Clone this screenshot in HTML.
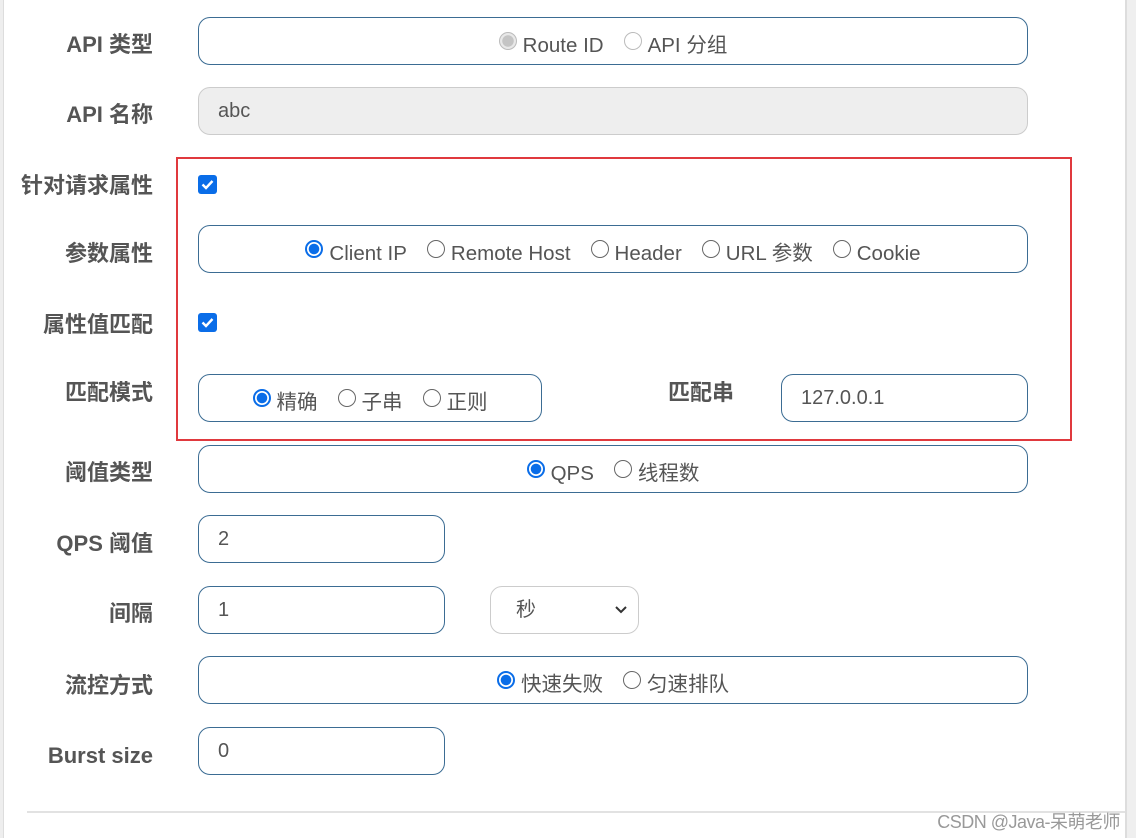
<!DOCTYPE html>
<html><head><meta charset="utf-8"><style>
body{margin:0;width:1136px;height:838px;overflow:hidden;background:#fff;position:relative;font-family:"Liberation Sans","Noto Sans CJK SC",sans-serif;color:#555}
.lb{position:absolute;right:983px;font-weight:bold;font-size:22px;color:#555;line-height:30px;white-space:nowrap}
.box{position:absolute;border:1px solid #3b6c93;border-radius:12px;box-sizing:border-box;height:48px}
.rg{display:flex;justify-content:center;align-items:center;font-size:20.5px;color:#555;padding-top:10px;line-height:24px}
.rg span{flex-shrink:0}
.r{display:inline-block;width:18px;height:18px;border:1.5px solid #666;border-radius:50%;box-sizing:border-box;margin:0 6px 0 0;position:relative;top:-5px}
.r.on{border:2px solid #0a6de8;background:radial-gradient(circle,#0a6de8 5px,#fff 5.5px)}
.r.dis{border:1.5px solid #bbb;background:radial-gradient(circle,#c4c4c4 5.5px,#e8e8e8 6px)}
.it{margin-right:20px}
.in{font-size:20px;color:#555;padding-left:19px;line-height:46px}
.cb{position:absolute;left:198px;width:19px;height:19px;background:#0a6de8;border-radius:3px}
</style></head><body>
<div style="position:absolute;left:0;top:0;width:3px;height:838px;background:#eee;border-right:1px solid #ddd"></div>
<div style="position:absolute;left:1125px;top:0;width:11px;height:838px;background:#efefef;border-left:2px solid #ddd"></div>

<div class="lb" style="top:30px">API 类型</div>
<div class="box rg" style="left:198px;top:17px;width:830px"><span class="r dis"></span><span class="it">Route ID</span><span class="r" style="border-color:#bbb"></span><span>API 分组</span></div>

<div class="lb" style="top:100px">API 名称</div>
<div class="box in" style="left:198px;top:87px;width:830px;background:#eee;border-color:#ccc">abc</div>

<div class="lb" style="top:171px">针对请求属性</div>
<div class="cb" style="top:175px"><svg width="19" height="19"><path d="M4.5 9.5l3.5 3.5 6.5-7" stroke="#fff" stroke-width="2.4" fill="none"/></svg></div>

<div class="lb" style="top:239px">参数属性</div>
<div class="box rg" style="left:198px;top:225px;width:830px"><span class="r on"></span><span class="it">Client IP</span><span class="r"></span><span class="it">Remote Host</span><span class="r"></span><span class="it">Header</span><span class="r"></span><span class="it">URL 参数</span><span class="r"></span><span>Cookie</span></div>

<div class="lb" style="top:310px">属性值匹配</div>
<div class="cb" style="top:313px"><svg width="19" height="19"><path d="M4.5 9.5l3.5 3.5 6.5-7" stroke="#fff" stroke-width="2.4" fill="none"/></svg></div>

<div class="lb" style="top:378px">匹配模式</div>
<div class="box rg" style="left:198px;top:374px;width:344px"><span class="r on"></span><span class="it">精确</span><span class="r"></span><span class="it">子串</span><span class="r"></span><span>正则</span></div>
<div class="lb" style="top:378px;right:auto;left:668px">匹配串</div>
<div class="box in" style="left:781px;top:374px;width:247px">127.0.0.1</div>

<div style="position:absolute;left:176px;top:157px;width:896px;height:284px;border:2px solid #e0393e;box-sizing:border-box"></div>

<div class="lb" style="top:458px">阈值类型</div>
<div class="box rg" style="left:198px;top:445px;width:830px"><span class="r on"></span><span class="it">QPS</span><span class="r"></span><span>线程数</span></div>

<div class="lb" style="top:529px">QPS 阈值</div>
<div class="box in" style="left:198px;top:515px;width:247px">2</div>

<div class="lb" style="top:599px">间隔</div>
<div class="box in" style="left:198px;top:586px;width:247px">1</div>
<div class="box in" style="left:490px;top:586px;width:149px;border-color:#ccc;padding-left:25px">秒<svg style="position:absolute;right:10px;top:18px" width="14" height="10"><path d="M2 2l5 5 5-5" stroke="#333" stroke-width="2" fill="none"/></svg></div>

<div class="lb" style="top:671px">流控方式</div>
<div class="box rg" style="left:198px;top:656px;width:830px"><span class="r on"></span><span class="it">快速失败</span><span class="r"></span><span>匀速排队</span></div>

<div class="lb" style="top:741px">Burst size</div>
<div class="box in" style="left:198px;top:727px;width:247px">0</div>

<div style="position:absolute;left:27px;top:811px;width:1098px;height:2px;background:#e2e2e2"></div>
<div style="position:absolute;right:16px;top:808px;font-size:18px;color:#999;white-space:nowrap;letter-spacing:-0.5px">CSDN @Java-呆萌老师</div>
</body></html>
